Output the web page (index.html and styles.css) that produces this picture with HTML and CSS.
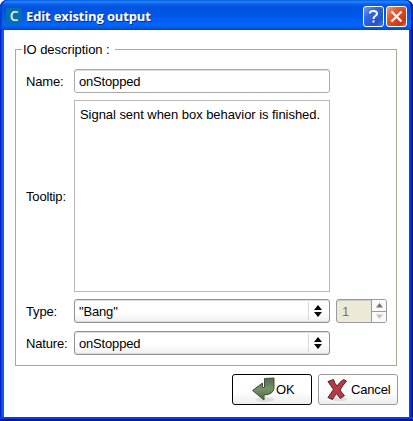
FILE: index.html
```html
<!DOCTYPE html>
<html lang="en">
<head>
<meta charset="utf-8">
<title>Edit existing output</title>
<link rel="stylesheet" href="styles.css">
</head>
<body>
<div class="window">
  <header class="titlebar">
    <span class="logo">C</span>
    <h1>Edit existing output</h1>
    <button class="tool help" aria-label="Help"><svg width="19" height="19" viewBox="0 0 19 19"><path d="M6 6.500V5.500Q6.500 4 9.500 4Q13 4 13 6.500Q13 8 11.300 9Q9.500 10 9.500 12M9.500 13.500V15.500" fill="none" stroke="#fff" stroke-width="2"/></svg></button>
    <button class="tool close" aria-label="Close"><svg width="19" height="19" viewBox="0 0 19 19"><path d="M4.500 4.500L14.500 14.500M14.500 4.500L4.500 14.500" stroke="#fff" stroke-width="2.300"/></svg></button>
  </header>
  <main class="content">
    <fieldset class="group">
      <legend>IO description :</legend>
      <div class="form">
        <label>Name:</label>
        <div class="field">onStopped</div>
        <label>Tooltip:</label>
        <div class="area">Signal sent when box behavior is finished.</div>
        <label>Type:</label>
        <div class="field combo">"Bang"<span class="arrows"><svg width="8" height="12" viewBox="0 0 8 12"><path d="M4 0L8 5H0ZM0 7H8L4 12Z"/></svg></span></div>
        <div class="spinner"><span class="value">1</span><span class="steps"><span><svg width="7" height="5" viewBox="0 0 7 5"><path d="M3.500 0L7 4.500H0Z" fill="#77736a"/></svg></span><span><svg width="7" height="5" viewBox="0 0 7 5"><path d="M0 .5H7L3.500 5Z" fill="#c3c3bd"/></svg></span></span></div>
        <label class="last">Nature:</label>
        <div class="field combo last">onStopped<span class="arrows"><svg width="8" height="12" viewBox="0 0 8 12"><path d="M4 0L8 5H0ZM0 7H8L4 12Z"/></svg></span></div>
      </div>
    </fieldset>
    <footer class="actions">
      <button class="action ok">
        <svg width="25" height="26" viewBox="0 0 25 26"><defs><linearGradient id="green" x2="0" y2="1"><stop stop-color="#536b49"/><stop offset=".5" stop-color="#78926c"/><stop offset="1" stop-color="#4c6843"/></linearGradient></defs><ellipse cx="14" cy="22.500" rx="9" ry="2.500" fill="#ddd"/><path d="M13.500 1.500L23 1V11.500Q22 17.500 13 18V23L1.500 13.500L11.500 6V10.500H13.500Z" fill="url(#green)" stroke="#40503a"/></svg><span>OK</span>
      </button>
      <button class="action cancel">
        <svg width="21" height="24" viewBox="0 0 21 24"><ellipse cx="12" cy="21" rx="8" ry="2" fill="#ddd"/><path d="M1 3.500L6.500 1.500Q7.500 5.500 10 8Q12.500 4 16.500 1.500L19.500 3Q16 7 13 12Q15 15.500 17.500 17.500L13.500 20.500Q11.500 18.500 9.500 15.500Q7.500 18 5.500 21.500L1 19.500Q4 15 6.500 11.500Q3.500 7.500 1 3.500Z" fill="#b83943" stroke="#4e2527"/></svg><span>Cancel</span>
      </button>
    </footer>
  </main>
</div>
</body>
</html>
```
FILE: styles.css
```css
* { box-sizing: border-box; }
html { background: #fff; }
body { margin: 0; font: 13px/15px "Liberation Sans", Arial, sans-serif; letter-spacing: -.17px; color: #000; overflow: hidden; }
button { font: inherit; letter-spacing: inherit; color: inherit; padding: 0; }
svg { display: block; flex: none; }

.window {
  width: 413px; height: 421px; padding: 0 4px 4px; border-radius: 7px 7px 0 0;
  display: flex; flex-direction: column;
  background: linear-gradient(90deg, #0019cf 0, #0831d9 1px, #166aee 3px, #0855dd 4px, #0855dd calc(100% - 4px), #0540e5 calc(100% - 3px), #001da0 calc(100% - 1px), #00138c);
  box-shadow: inset 0 -2px #00138c, inset 0 -4px #0441d8;
}
.titlebar {
  height: 30px; margin: 0 -4px; padding: 2px 6px 0; border-radius: 7px 7px 0 0;
  display: flex; align-items: center; flex: none;
  background: linear-gradient(#0753d3 0, #0980f5 1px, #2c7df8 2px, #0762ed 4px, #0053df 7px, #0055e5 13px, #005df3 20px, #0267ff 25px, #0059e5 28px, #0044bd 30px);
  box-shadow: inset 2px 0 #0441cb, inset -2px 0 #001da0;
}
.logo {
  width: 16px; height: 16px; border-radius: 2px; background: #0870a8; color: #e2f2fa;
  font: 600 14px/16px "Open Sans", sans-serif; text-align: center;
}
h1 {
  flex: 1; margin: 0 0 0 4px; color: #fff; font: bold 13px/18px "Open Sans", sans-serif;
  letter-spacing: -.15px; text-shadow: 1px 1px #092f87; white-space: nowrap;
}
.tool {
  width: 21px; height: 21px; border: 1px solid #fff; border-radius: 3px; margin-left: 2px;
  display: flex; align-items: center; justify-content: center;
}
.help { background: linear-gradient(135deg, #7495ed, #3267e0 35%, #2352c9 75%, #437cf0); }
.close { background: linear-gradient(135deg, #ee9a82, #e45732 35%, #c43815 80%, #e16b46); }

.content { flex: 1; background: #fff; padding: 12px 11px; }
.group { height: 324px; margin: 0 1px 0 0; padding: 12px 8px 0; border: 1px solid #aca899; min-width: 0; }
legend { height: 15px; margin-left: -2px; padding: 0 5px 0 1px; letter-spacing: -.05px; }
.form { display: grid; grid-template-columns: 50px 256px 57px; grid-template-rows: 24px 192px 24px 25px; row-gap: 7px; }
.form > label { grid-column: 1; align-self: center; padding-left: 2px; white-space: nowrap; }
.form > .last { margin-top: 1px; }
.field {
  grid-column: 2; height: 24px; border: 1px solid #aaa; border-radius: 3px; padding: 0 0 0 4px;
  display: flex; align-items: center; box-shadow: inset 0 1px #ddd; white-space: nowrap;
}
.area { grid-column: 2; border: 1px solid #b8b8b8; padding: 6px 5px; white-space: nowrap; letter-spacing: -.05px; }
.combo { border-color: #929292; background: linear-gradient(#fff 60%, #eee); box-shadow: inset 0 1px #ddd, inset 0 -1px #ddd; }
.arrows { width: 21px; height: 18px; padding-right: 2px; margin-left: auto; border-left: 1px solid #d8d8d8; display: flex; align-items: center; justify-content: center; }
.spinner { grid-column: 3; margin-left: 6px; width: 51px; height: 24px; border: 1px solid #9b9b9b; border-radius: 3px; display: flex; background: #ece9d8; box-shadow: inset 0 1px #ccc; color: #77736a; }
.value { flex: 1; padding: 4px 5px; }
.steps { width: 15px; border-left: 1px solid #9b9b9b; background: #fafafa; border-radius: 0 2px 2px 0; display: flex; flex-direction: column; }
.steps span { flex: 1; display: flex; align-items: center; justify-content: center; }
.steps span + span { border-top: 1px solid #9b9b9b; }

.actions { display: flex; justify-content: flex-end; gap: 6px; margin-top: 8px; }
.action { width: 80px; height: 31px; border: 1px solid #999; border-radius: 3px; background: linear-gradient(#fff 55%, #eee); display: flex; align-items: center; white-space: nowrap; }
.ok { border-color: #000; padding-left: 18px; }
.cancel { padding-left: 8px; gap: 3px; }
```
